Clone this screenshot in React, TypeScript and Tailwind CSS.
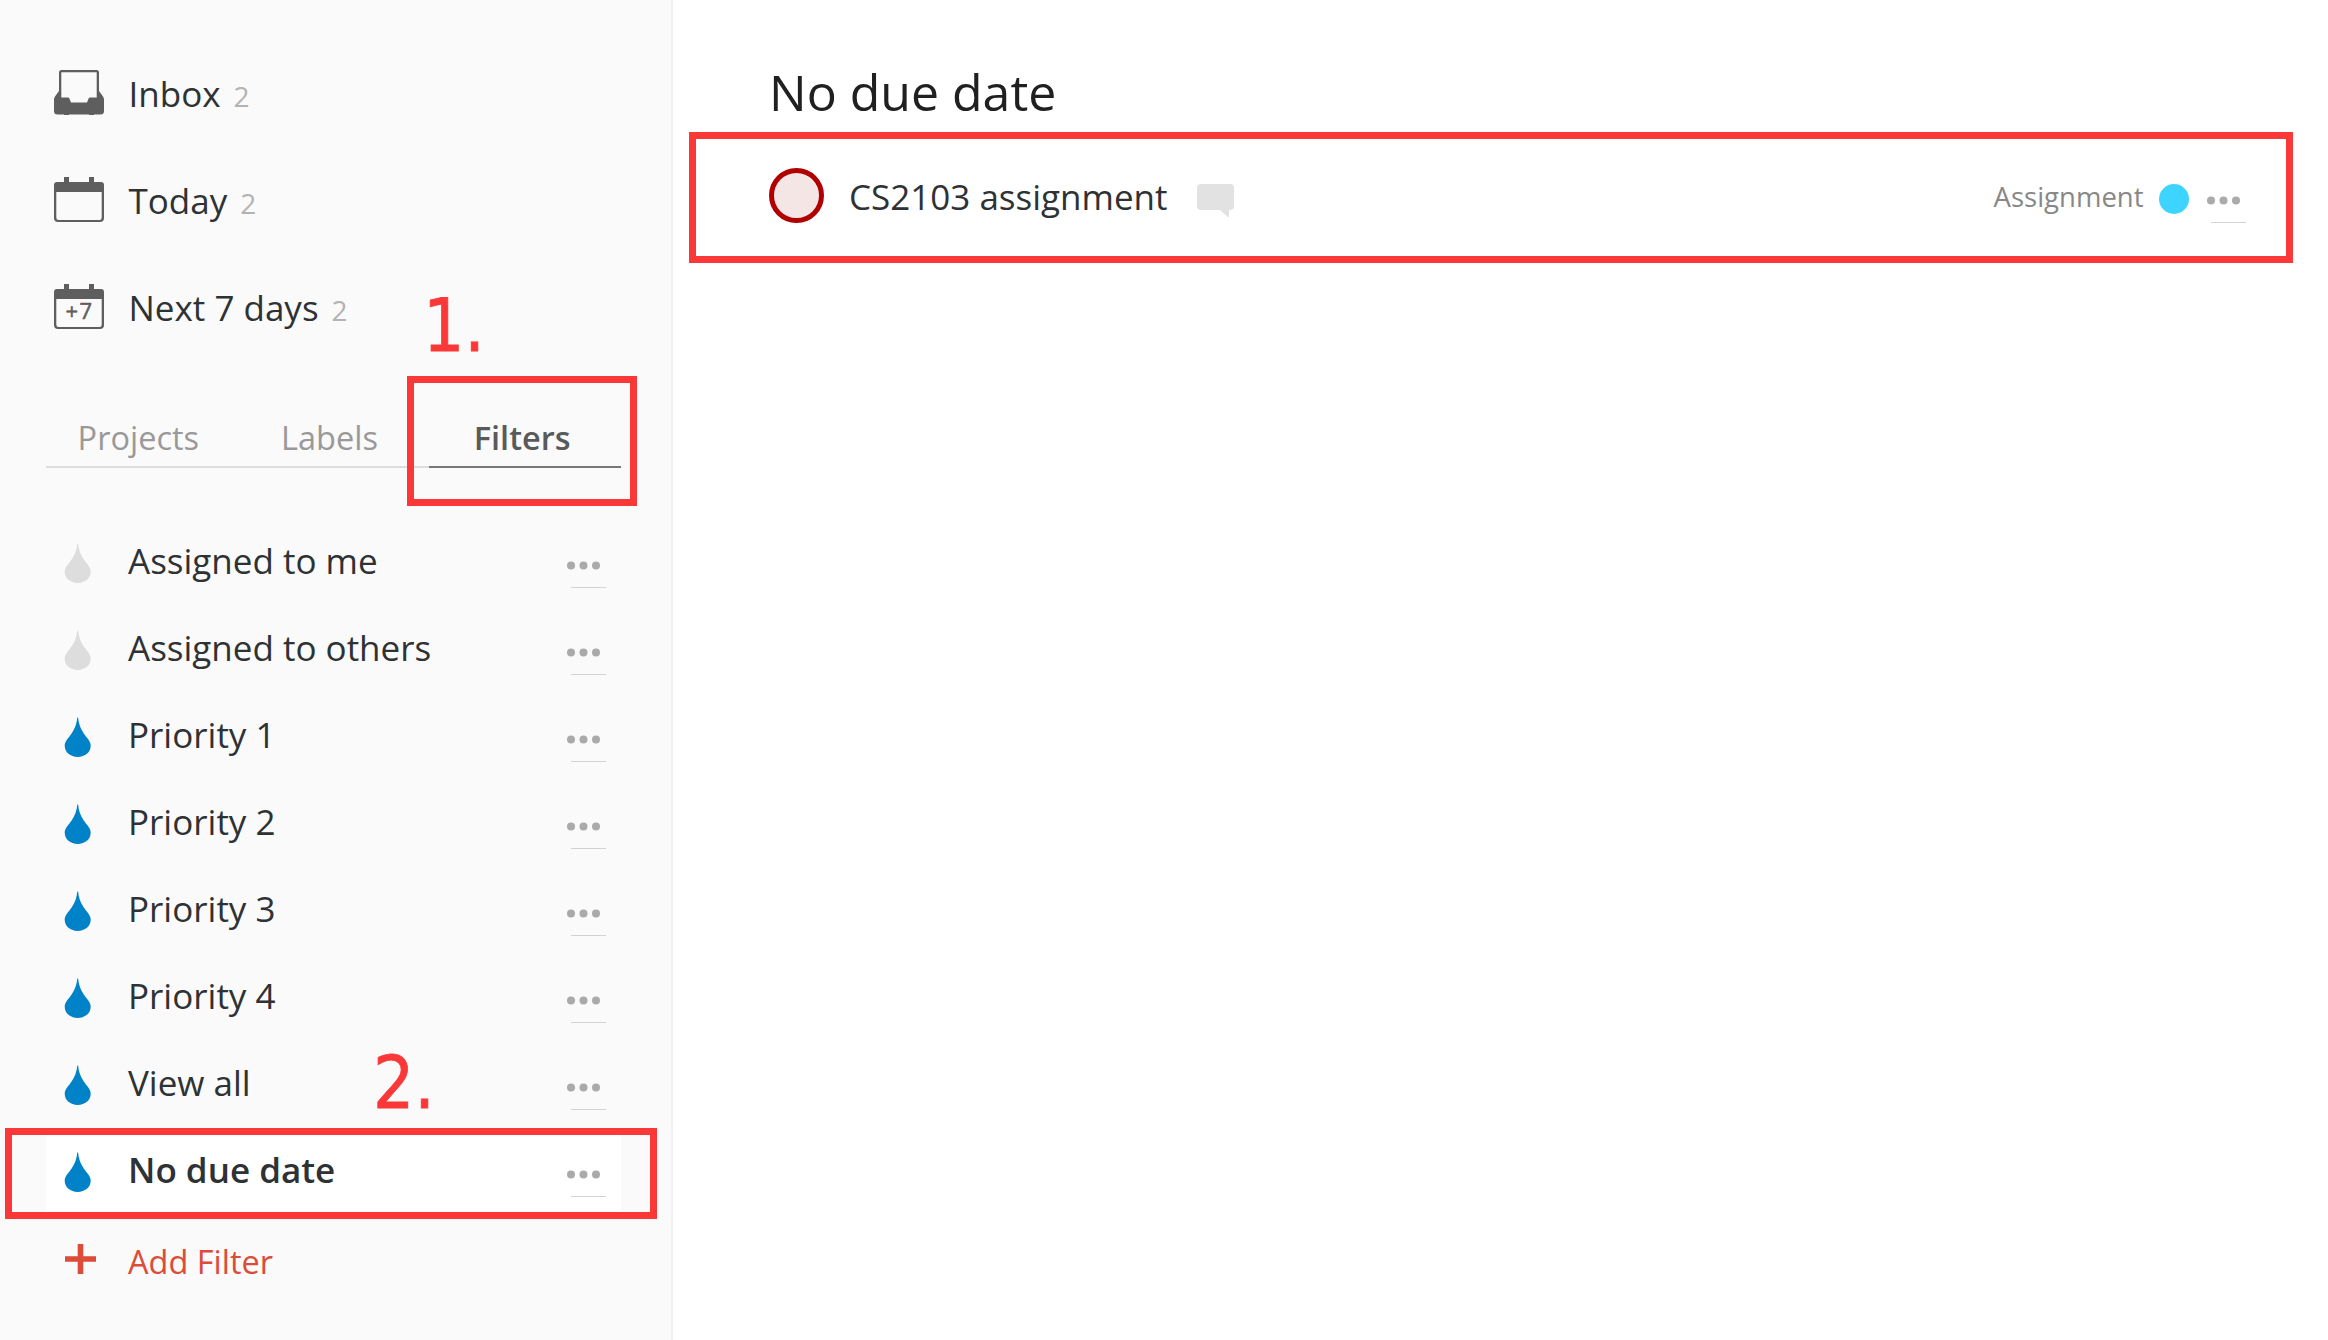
import type { ReactNode } from 'react';

const FILTERS = [
  { name: 'Assigned to me', tint: 'text-[#dddddd]' },
  { name: 'Assigned to others', tint: 'text-[#dddddd]' },
  { name: 'Priority 1', tint: 'text-[#0082c8]' },
  { name: 'Priority 2', tint: 'text-[#0082c8]' },
  { name: 'Priority 3', tint: 'text-[#0082c8]' },
  { name: 'Priority 4', tint: 'text-[#0082c8]' },
  { name: 'View all', tint: 'text-[#0082c8]' },
  { name: 'No due date', tint: 'text-[#0082c8]', selected: true },
];

function InboxIcon() {
  return (
    <svg width="50" height="46" viewBox="0 0 50 46" className="block" fill="#5e5e5e">
      <path
        fillRule="evenodd"
        d="M7.500 0h35a2.500 2.500 0 0 1 2.500 2.500V21l4 5.500q1 1.500 1 3V41q0 3.500-3.500 3.500h-43Q0 44.500 0 41V29.500q0-1.500 1-3L5 21V2.500A2.500 2.500 0 0 1 7.500 0ZM7.300 2.300V27.500h6.700q1 0 1.400 1l1.600 4h16l1.600-4q.4-1 1.400-1h6.700V2.300Z"
      />
      <rect x="10" y="43" width="5" height="2" />
      <rect x="35" y="43" width="5" height="2" />
    </svg>
  );
}

function CalendarIcon({ label }: { label?: string }) {
  return (
    <svg width="50" height="46" viewBox="0 0 50 46" className="block" fill="#5e5e5e">
      <rect x="10" y="0" width="5" height="7" />
      <rect x="35" y="0" width="5" height="7" />
      <path
        fillRule="evenodd"
        d="M3 5H47Q50 5 50 8V41Q50 45 46 45H4Q0 45 0 41V8Q0 5 3 5ZM2.300 15V40.500Q2.300 43 4.500 43H45.500Q47.700 43 47.700 40.500V15Z"
      />
      {label && (
        <text x="25.500" y="35" textAnchor="middle" fontSize="22" fontWeight="500" letterSpacing="1.500" fontFamily="Open Sans" stroke="#5e5e5e" strokeWidth="0.500">
          {label}
        </text>
      )}
    </svg>
  );
}

function Drop({ className }: { className: string }) {
  return (
    <svg width="27" height="40" viewBox="0 0 27 40" className={className} fill="currentColor">
      <path d="M13.300 .5H14.100C14.600 6.500 16.500 11.500 19.800 16.500C22.700 21 26.700 24 26.700 28.600C26.700 35.500 21 40 13.700 40S.7 35.500 .7 28.600C.7 24 4.700 21 7.600 16.500C10.900 11.500 12.800 6.500 13.300 .5Z" />
    </svg>
  );
}

function MoreButton() {
  return (
    <div className="relative h-[27px] w-[40px]">
      <svg width="34" height="9" viewBox="0 0 34 9" className="block" fill="#aaaaaa">
        <circle cx="4" cy="4.500" r="4" />
        <circle cx="16.500" cy="4.500" r="4" />
        <circle cx="29" cy="4.500" r="4" />
      </svg>
      <div className="absolute bottom-0 left-1 h-px w-[35px] bg-[#d3d3d3]" />
    </div>
  );
}

function NavItem({ icon, label, count }: { icon: ReactNode; label: string; count: number }) {
  return (
    <div className="flex h-[107px] items-start">
      <div className="ml-[8px] w-[74.500px] shrink-0">{icon}</div>
      <div className="-mt-px flex items-baseline gap-[13px] text-[35px] leading-[50px] text-[#2e3234]">
        {label}
        <span className="text-[28px] text-[#b3b3b3]">{count}</span>
      </div>
    </div>
  );
}

export default function App() {
  return (
    <div className="relative flex h-[1340px] w-[2328px] overflow-hidden bg-white font-['Open_Sans',sans-serif] whitespace-nowrap">
      <aside className="h-full w-[673px] shrink-0 border-r-2 border-[#f0f0f0] bg-[#fafafa] pt-[70px] pl-[46px]">
        <NavItem icon={<InboxIcon />} label="Inbox" count={2} />
        <NavItem icon={<CalendarIcon />} label="Today" count={2} />
        <NavItem icon={<CalendarIcon label="+7" />} label="Next 7 days" count={2} />

        <div className="grid h-[77px] w-[575px] grid-cols-3 text-center text-[32.500px] leading-[45px] text-[#999999]">
          <div className="border-b-2 border-[#dedede] pt-[24px] pr-[7px]">Projects</div>
          <div className="border-b-2 border-[#dedede] pt-[24px] pr-[8px]">Labels</div>
          <div className="border-b-2 border-[#777777] pt-[24px] pr-[6px] font-semibold text-[#5a5a5a]">Filters</div>
        </div>

        <div className="mt-[51px] w-[575px]">
          {FILTERS.map((f) => (
            <div key={f.name} className={f.selected ? 'flex h-[87px] items-start bg-white pt-[24px] font-semibold' : 'flex h-[87px] items-start pt-[24px]'}>
              <Drop className={`ml-[18px] mr-[37px] ${f.tint}`} />
              <div className="-mt-[6px] flex-1 text-[35px] leading-[48px] text-[#2e3234]">{f.name}</div>
              <div className="mt-[18px] mr-[14px]">
                <MoreButton />
              </div>
            </div>
          ))}
        </div>

        <div className="mt-[11px] flex items-center text-[32.500px] leading-[60px] text-[#dd4b39]">
          <svg width="31" height="30" viewBox="0 0 31 30" className="ml-[19px] mr-[32px]" fill="currentColor">
            <path d="M12.700 0h5.600v12.200h12.700v5.600H18.300V30h-5.600V17.800H0v-5.600h12.700Z" />
          </svg>
          <span className="pt-[6px] -mb-px">Add Filter</span>
        </div>
      </aside>

      <main className="flex-1 pt-[58px]">
        <h1 className="pl-[96px] text-[50px] leading-[68px] text-[#202020]">No due date</h1>
        <div className="mt-[6px] ml-[16px] flex h-[131px] w-[1604px] items-start border-[7px] border-[#fb3838] pl-[73px]">
          <div className="mt-[29px] size-[55px] rounded-full border-[5px] border-[#b00000] bg-[#f5e6e6]" />
          <div className="mt-[34px] ml-[25px] text-[35px] leading-[48px] text-[#2e3234]">CS2103 assignment</div>
          <svg width="37" height="34" viewBox="0 0 37 34" className="mt-[45px] ml-[29px]" fill="#e2e2e2">
            <path d="M4 0H33Q37 0 37 4V22Q37 26 33 26H32V33H31L23 26H4Q0 26 0 22V4Q0 0 4 0Z" />
          </svg>
          <div className="mt-[39px] ml-auto text-[27.500px] leading-[38px] text-[#888888]">Assignment</div>
          <div className="mt-[45px] ml-[15.500px] size-[30px] rounded-full bg-[#3dd5ff]" />
          <div className="mt-[57px] mr-[39px] ml-[18px]">
            <MoreButton />
          </div>
        </div>
      </main>

      <div className="absolute top-[376px] left-[407px] h-[130px] w-[230px] border-[7px] border-[#fb3838]" />
      <div className="absolute top-[1128px] left-[5px] h-[91px] w-[652px] border-[7px] border-[#fb3838]" />
      <div className="absolute top-[284px] left-[423px] origin-left scale-x-[0.89] font-['DejaVu_Sans',sans-serif] text-[73px] leading-[84px] text-[#fb3838] [-webkit-text-stroke:0.800px_#fb3838]">1.</div>
      <div className="absolute top-[1041px] left-[373px] origin-left scale-x-[0.89] font-['DejaVu_Sans',sans-serif] text-[73px] leading-[84px] text-[#fb3838] [-webkit-text-stroke:0.800px_#fb3838]">2.</div>
    </div>
  );
}
